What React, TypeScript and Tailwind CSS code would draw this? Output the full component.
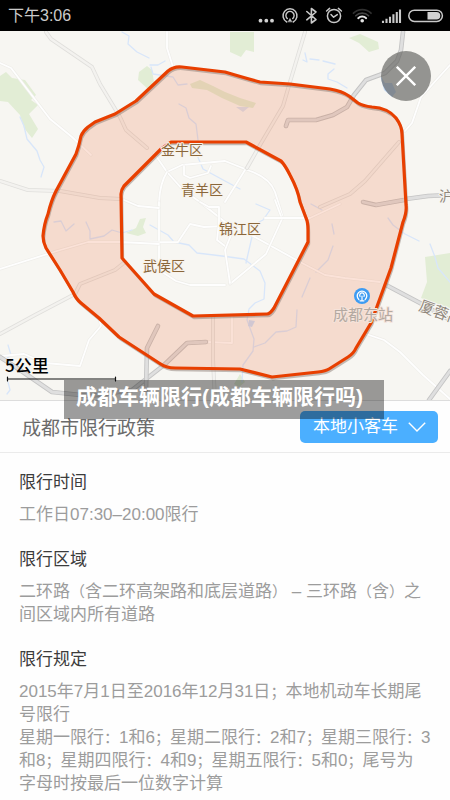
import React from "react";

const RING_OUTER =
  "M182 67 L225 72 Q245 78 260 82 L290 84 L330 89 Q342 91 349 96 L358 103 Q363 106 372 107 Q388 108 396 118 Q402 126 402 134 L406 205 Q407 212 403 222 L391 268 L371 323 L356 348 Q354 353 348 357 L329 369 Q326 371 318 372 L272 377 L240 369 L175 368 Q166 368 159 363 L119 337 L99 318 L81 303 Q76 299 73 292 L60 270 L46 248 Q43 242 43 236 Q44 224 48 214 Q51 201 56 191 L76 154 Q79 146 81 136 Q83 131 88 127 L95 122 L115 114 L136 101 L168 71 Q174 66 182 67 Z";
const RING_INNER =
  "M171 142 L246 142 L281 161 Q285 165 290 175 Q298 190 300 202 L306 218 Q308 222 308 230 L308 242 L274 308 Q270 314 267 314 L193 316 L154 294 L122 258 L121 194 Q121 190 124 186 L161 149 Z";

const GREENS = [
  "M0 76 L6 72 L12 78 L25 80 L36 95 L31 100 L38 105 L29 114 L38 129 L32 138 L24 128 L20 115 L8 102 L0 101 Z",
  "M139 72 L147 66 L152 70 L154 82 L149 90 L138 80 Z",
  "M230 32 L254 32 L254 52 L246 50 L241 57 L230 52 Z",
  "M349 38 L360 34 L378 42 L379 49 L369 52 L359 43 Z",
  "M425 257 L450 253 L450 308 L435 303 L421 298 L427 282 Z",
  "M126 233 L136 228 L140 219 L146 218 L143 227 L146 233 L138 236 Z",
  "M234 384 L240 374 L245 382 L239 387 Z",
  "M190 84 L200 80 L213 86 L225 92 L240 98 L256 103 L253 108 L240 106 L222 98 L207 90 L192 88 Z",
];

const RIVERS = [
  "M122 32 L129 36 L128 44 L137 52 L149 58",
  "M150 65 L158 65 L165 61 M151 67 L153 74 L173 77 L178 85 L187 84",
  "M20 117 L24 126 L27 139 L37 151 L40 160 L44 167 L41 177",
  "M179 104 L186 108 L189 118 L196 124 L198 140 L197 155 L203 169 L225 181 L240 189",
  "M303 60 L307 62 L305 53 M310 59 L319 60 M323 61 L335 64 M334 69 L328 74 L328 79 L337 82 L347 88",
  "M54 222 L61 221 L66 231 L74 224 M86 222 L90 231 L90 239 L104 236 L112 230 L122 233 L132 230",
  "M150 225 L168 235 L174 242 L189 245 L197 253 L222 256 L244 259 L260 271 L265 283 L264 299 L255 303 L249 309 L247 320 L254 339 L253 351 L243 365 L242 382",
  "M311 204 L322 210 M332 224 L334 234 M333 246 L328 260 L316 272 M310 278 L302 297 M297 310 L296 327 L287 331 L276 332 L265 343 L254 347",
  "M256 204 L270 210 L263 220 L255 224 L251 241 L246 263",
  "M388 218 L393 225 L405 234 L419 241 M430 244 L435 257 L438 268 L450 282",
  "M8 345 L11 355 L5 360 M8 382 L10 390 L7 394",
];

const MINOR_ROADS = [
  "M0 63 L11 68 L50 119 L72 137 L91 155",
  "M167 32 L167 48 L173 67",
  "M154 153 L167 172 L183 190 L200 202 L225 222 L253 236 L300 262 L325 275 L345 278 L380 282",
  "M167 172 L182 165 L225 161 L250 171 Q270 178 275 192 L283 218",
  "M159 202 Q160 183 167 172",
  "M159 202 L159 270 L176 281 L190 285 L225 285",
  "M121 243 L178 242 L190 224 L204 227 L225 226",
  "M225 202 L245 170 L260 145",
  "M0 269 L57 251 L88 242 L121 242 L159 244",
  "M200 202 L209 207 L219 207 L219 222 L217 240 L225 246",
  "M124 200 L138 206 L159 208",
  "M275 200 L282 219 L266 254 L230 284",
  "M265 218 L310 218 L340 204",
  "M231 235 L225 250 L230 283",
  "M184 166 L184 175 L190 178 L208 173 L211 166",
  "M99 318 L101 326 L89 340 L80 366 L45 363 L24 354 L0 356",
  "M366 334 L384 340 L400 352 L423 375 L450 399",
  "M450 65 L421 97 L412 123 L405 131",
  "M207 342 L232 343 L232 314",
];

const MAIN_ROADS = [
  "M46 32 L51 39 L92 67 L100 84 L120 117 L126 130 L147 148",
  "M0 181 L28 190 L60 191 L100 198 L121 199",
  "M0 334 L35 315 L75 294 L80 284 L115 270 L125 262",
  "M305 32 L290 82 L283 106 L260 145 L247 168",
  "M399 142 L365 181 L350 194 L320 207",
  "M213 317 L213 360 L215 400",
];

const HIGHWAYS = [
  "M286 126 L288 120 L316 120 L333 115 L347 107 L354 95 L366 80 L385 73 L397 61 L401 50 L403 32",
  "M0 357 L20 370 L52 392 L90 396 L132 390 L164 365 L187 343 L206 342",
  "M158 326 L147 348 L146 390",
  "M386 285 L420 303 L450 320",
  "M450 371 L429 400",
  "M406 199 L428 196 L450 195",
  "M363 202 L376 205 L404 200",
];

const mapFont = "font-['Noto_Sans_CJK_SC',sans-serif]";

function DistrictLabel({ x, y, children }: { x: number; y: number; children: string }) {
  return (
    <text
      x={x}
      y={y}
      className={`${mapFont} fill-[#8a673b] stroke-[#f8f3ec] stroke-2 text-[14px] [paint-order:stroke]`}
    >
      {children}
    </text>
  );
}

function CityMap() {
  return (
    <svg
      viewBox="0 31 450 369"
      preserveAspectRatio="xMidYMid slice"
      className="block h-[369px] w-full bg-[#f7f6f2]"
      fill="none"
      strokeLinejoin="round"
      strokeLinecap="round"
      role="img"
      aria-label="成都市限行区域地图"
    >
      {GREENS.map((d) => (
        <path key={d} d={d} fill="#e2edd5" />
      ))}
      {RIVERS.map((d) => (
        <path key={d} d={d} stroke="#d8e6fa" strokeWidth="1.3" />
      ))}
      <path d="M380 75 L385 83 L392 83 L396 92 L392 97 L384 90 Z" fill="#c3dbfa" />
      <path d="M249 320 L255 321 L252 327 L248 326 Z" fill="#cddff7" />
      <path d="M236 107 L249 107 L243 112 Z" fill="#dbe2ef" />
      {MINOR_ROADS.map((d) => (
        <g key={d}>
          <path d={d} stroke="#eeede9" strokeWidth="3" />
          <path d={d} stroke="#fefefe" strokeWidth="1.8" />
        </g>
      ))}
      {MAIN_ROADS.map((d) => (
        <g key={d}>
          <path d={d} stroke="#e0dfdc" strokeWidth="4" />
          <path d={d} stroke="#f3f2ef" strokeWidth="2.4" />
        </g>
      ))}
      {HIGHWAYS.map((d) => (
        <g key={d}>
          <path d={d} stroke="#c4c4c4" strokeWidth="4.6" />
          <path d={d} stroke="#dfdfdf" strokeWidth="2.8" />
        </g>
      ))}

      <path d={`${RING_OUTER} ${RING_INNER}`} fillRule="evenodd" fill="#e84000" fillOpacity="0.15" />
      <g transform="translate(1 2)" stroke="#8d7d76" strokeOpacity="0.5" strokeWidth="2.4">
        <path d={RING_OUTER} />
        <path d={RING_INNER} />
      </g>
      <path d={RING_OUTER} stroke="#e83f00" strokeWidth="3.2" />
      <path d={RING_INNER} stroke="#e83f00" strokeWidth="3.2" />

      <DistrictLabel x={161} y={155}>金牛区</DistrictLabel>
      <DistrictLabel x={181} y={195}>青羊区</DistrictLabel>
      <DistrictLabel x={219} y={234}>锦江区</DistrictLabel>
      <DistrictLabel x={143} y={271}>武侯区</DistrictLabel>

      <text x="333" y="320" className={`${mapFont} fill-[#b3a9a1] stroke-[#f5e3da] stroke-2 text-[15px] [paint-order:stroke]`}>
        成都东站
      </text>
      <text x="439" y="201" className={`${mapFont} fill-[#8f877c] stroke-[#f7f6f2] stroke-2 text-[14px] [paint-order:stroke]`}>
        沪
      </text>
      <text
        x="418"
        y="310"
        transform="rotate(20 418 310)"
        className={`${mapFont} fill-[#8f877c] stroke-[#f7f6f2] stroke-2 text-[15px] [paint-order:stroke]`}
      >
        厦蓉高
      </text>

      <circle cx="362" cy="296" r="8" fill="#3d9bf2" />
      <path d="M358.8 299.5 A4.8 4.8 0 1 1 365.2 299.5" stroke="#fff" strokeWidth="1.3" />
      <path d="M360 296.4 A2.3 2.3 0 1 1 364 296.4 M362 296 V300.5 M360 300.8 H364" stroke="#fff" strokeWidth="1.2" />

      <text x="5" y="372" className={`${mapFont} fill-black text-[17px] font-medium`}>
        5公里
      </text>
      <path d="M7.5 377 V381 M7.5 379 H115.5 M115.5 377 V381" stroke="#111" strokeWidth="1.2" />
    </svg>
  );
}

function StatusIcons() {
  return (
    <svg viewBox="258 0 186 31" className="h-[31px] w-[186px]" fill="none" stroke="#c9c9c9" strokeLinecap="round" strokeLinejoin="round" aria-hidden="true">
      <g fill="#d2d2d2" stroke="none">
        <circle cx="260.5" cy="20.7" r="1.9" />
        <circle cx="266.3" cy="20.7" r="1.9" />
        <circle cx="272" cy="20.7" r="1.9" />
      </g>
      <path d="M286.8 22 A7 7 0 1 1 293.2 22" strokeWidth="1.5" />
      <path d="M287.3 18.6 A4.1 4.1 0 1 1 292.7 18.6" strokeWidth="1.4" />
      <path d="M288.3 21.5 L290 18.5 L291.7 21.5 Z" fill="#c9c9c9" strokeWidth="0.6" />
      <path d="M306.8 11.5 L316 19.5 L311.4 23 V8.5 L316 12 L306.8 19.8" strokeWidth="1.6" />
      <circle cx="334" cy="16" r="6.6" strokeWidth="1.5" />
      <path d="M331 14.5 L333.6 17.2 L337.3 14.6 M326.6 11 L329.6 8.4 M341.4 11 L338.4 8.4" strokeWidth="1.5" />
      <path d="M353.5 13.2 A12.5 12.5 0 0 1 371 13.2" stroke="#303030" strokeWidth="1.8" />
      <path d="M355.8 15.8 A9 9 0 0 1 368.6 15.8" stroke="#444444" strokeWidth="1.6" />
      <path d="M358.2 18.2 A5.7 5.7 0 0 1 366.2 18.2" stroke="#e5e5e5" strokeWidth="1.9" />
      <circle cx="362.2" cy="20.7" r="1.8" fill="#e5e5e5" stroke="none" />
      <path d="M383 22 V21.8 M386.5 22 V19.8 M390 22 V17.8 M393.4 22 V15.4 M396.8 22 V13 M400 22 V10.6" strokeWidth="2.1" strokeLinecap="square" />
      <rect x="408.8" y="10.2" width="33.6" height="11.2" rx="5.6" strokeWidth="1.5" />
      <path d="M427.5 12 H436.5 A3.8 3.8 0 0 1 436.5 19.6 H427.5 Z" fill="#d2d2d2" stroke="none" />
    </svg>
  );
}

/** Full-width punctuation, set a step smaller than the text around it. */
function P({ children }: { children: string }) {
  return <span className="text-[15px]">{children}</span>;
}

function Rule({ title, children }: { title: string; children: React.ReactNode }) {
  return (
    <section>
      <h2 className="text-[17px] leading-6 text-[#3c3c3c]">{title}</h2>
      <p className="mt-2 text-[17px] leading-[23px] text-[#9c9c9c]">{children}</p>
    </section>
  );
}

export default function App() {
  return (
    <div className="relative min-h-screen overflow-hidden bg-[#fefefe] font-['Liberation_Sans','Noto_Sans_CJK_SC',sans-serif]">
      <header className="flex h-[31px] items-center justify-between bg-black pr-1.5 pl-2">
        <span className="text-[16px] leading-[31px] text-[#cbcbcb]">下午3:06</span>
        <StatusIcons />
      </header>

      <div className="relative border-b border-[#dddddd]">
        <CityMap />
        <button
          type="button"
          aria-label="关闭"
          className="absolute top-5 right-[19px] flex size-[50px] items-center justify-center rounded-full bg-[#605f5c]/65"
        >
          <svg viewBox="0 0 20 20" className="size-5" stroke="#fff" strokeWidth="2.4" aria-hidden="true">
            <path d="M0.8 0.8 L19.2 19.2 M19.2 0.8 L0.8 19.2" />
          </svg>
        </button>
      </div>

      <div className="flex h-[52px] items-center justify-between border-b border-[#ebebeb] pr-3 pl-[22px]">
        <h1 className="pt-1 text-[19px] leading-6 text-[#6b6b6b]">成都市限行政策</h1>
        <div className="relative">
          <select
            aria-label="车型"
            defaultValue="local"
            className="block h-8 w-[138px] appearance-none rounded-[5px] bg-[#4bafff] pl-[13px] text-[17px] leading-8 text-white"
          >
            <option value="local">本地小客车</option>
          </select>
          <svg viewBox="0 0 18 10" className="pointer-events-none absolute top-[11px] right-3 h-2.5 w-[18px]" fill="none" stroke="#fff" strokeWidth="1.4" aria-hidden="true">
            <path d="M0.8 0.8 L9 9 L17.2 0.8" />
          </svg>
        </div>
      </div>

      <main className="flex flex-col gap-[22px] px-[19px] pt-[18px] whitespace-nowrap">
        <Rule title="限行时间">工作日07:30–20:00限行</Rule>
        <Rule title="限行区域">
          二环路<P>（</P>含二环高架路和底层道路<P>）</P> – 三环路<P>（</P>含<P>）</P>之
          <br />
          间区域内所有道路
        </Rule>
        <Rule title="限行规定">
          2015年7月1日至2016年12月31日<P>；</P>本地机动车长期尾
          <br />
          号限行
          <br />
          星期一限行<P>：</P>1和6<P>；</P>星期二限行<P>：</P>2和7<P>；</P>星期三限行<P>：</P>3
          <br />
          和8<P>；</P>星期四限行<P>：</P>4和9<P>；</P>星期五限行<P>：</P>5和0<P>；</P>尾号为
          <br />
          字母时按最后一位数字计算
        </Rule>
      </main>

      <div className="absolute top-[380px] left-1/2 flex h-[39px] w-80 -translate-x-[161px] bg-black/38 pl-3">
        <p className="text-[21px] leading-[34px] font-bold whitespace-nowrap text-white">成都车辆限行(成都车辆限行吗)</p>
      </div>
    </div>
  );
}
